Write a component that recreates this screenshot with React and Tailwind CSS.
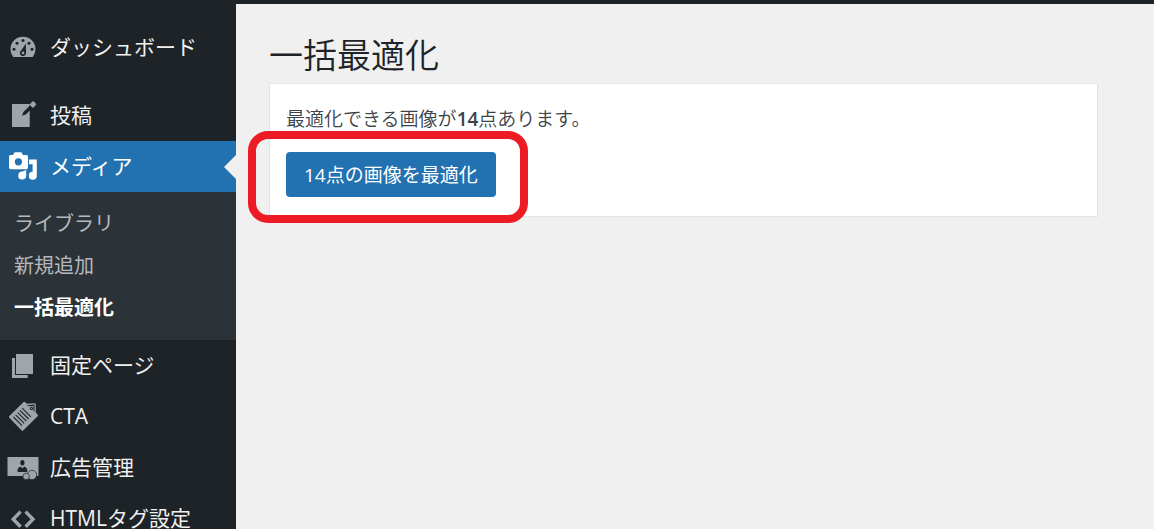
import React from 'react';

const DashboardIcon = () => (
  <svg viewBox="0 0 30 31" className="h-[31px] w-[30px] shrink-0 fill-[#a0a5aa]" aria-hidden="true">
    <path d="M5.2 25A12.5 12.5 0 1 1 24.8 25Z" />
    <g className="fill-[#1d2327]">
      <circle cx="15" cy="8.4" r="1.5" />
      <circle cx="9" cy="11.2" r="1.5" />
      <circle cx="21" cy="11.2" r="1.5" />
      <circle cx="6" cy="17.3" r="1.5" />
      <circle cx="24" cy="17.3" r="1.5" />
      <path d="M17.8 11.6L18 21.4A3.1 3.1 0 1 1 13.4 18.2Z" />
    </g>
    <circle cx="15" cy="20.9" r="1.4" />
  </svg>
);

const PostIcon = () => (
  <svg viewBox="0 0 30 31" className="h-[31px] w-[30px] shrink-0 fill-[#a0a5aa]" aria-hidden="true">
    <path d="M4 4H21.7V27H4Z" />
    <path d="M14 15.8L15.4 12L23 4.4L25.4 6.8L17.8 14.4Z" className="fill-[#1d2327]" />
    <path d="M21.6 4.4L24.4 1.6Q25.2 0.8 26.2 1.8L27.6 3.2Q28.6 4.4 27.6 5.4L24.8 8Z" />
  </svg>
);

const MediaIcon = () => (
  <svg viewBox="0 0 30 31" className="h-[31px] w-[30px] shrink-0 fill-white" aria-hidden="true">
    <path d="M2.5 4H5L6.6 1.2H13.4L15 4H18.4Q20 4 20 5.6V16.6Q20 18.2 18.4 18.2H2.6Q1 18.2 1 16.6V5.6Q1 4 2.5 4Z" />
    <circle cx="10.4" cy="10.8" r="3.6" className="fill-[#2271b1]" />
    <path d="M21 8.4H28.8V25A4 4 0 1 1 24.6 20.8V13.2H21Z" />
    <path d="M14.4 20.6L18.2 19V24.8A4 4 0 1 1 14.4 20.6Z" />
  </svg>
);

const PagesIcon = () => (
  <svg viewBox="0 0 30 31" className="h-[31px] w-[30px] shrink-0 fill-[#a0a5aa]" aria-hidden="true">
    <path d="M4 8H7V25H19.7V28H4Z" />
    <path d="M8 4H25V24H8Z" />
  </svg>
);

const CtaIcon = () => (
  <svg viewBox="0 0 30 31" className="h-[31px] w-[30px] shrink-0 fill-[#a0a5aa]" aria-hidden="true">
    <path d="M1.4 15L15.6 1Q16.4 0.4 17.2 1.2L19 2.8L26.4 2.2Q27.8 2.2 27.8 3.6V11.4L29.6 13.4Q30.4 14.4 29.6 15.2L15.2 29.4Q14.4 30 13.6 29.4L1.2 16.6Q0.6 15.8 1.4 15Z" />
    <g className="fill-none stroke-[#1d2327] stroke-[1.1]">
      <path d="M5.4 16L14 24.6M7.6 13.8L16.2 22.4M9.8 11.6L18.4 20.2M12 9.4L20.6 18M14.2 7.2L22.8 15.8" />
      <path d="M19.4 4.8L26 4.2V10.6" />
      <circle cx="23.4" cy="7.4" r="1.1" />
    </g>
  </svg>
);

const AdsIcon = () => (
  <svg viewBox="0 0 30 31" className="h-[31px] w-[30px] shrink-0 overflow-visible fill-[#a0a5aa]" aria-hidden="true">
    <path d="M-0.5 5H30.5V24H-0.5Z" />
    <g className="fill-[#1d2327]">
      <ellipse cx="14.4" cy="10.8" rx="2.1" ry="2.7" />
      <path d="M9.6 20V17.4Q9.8 15.4 12.6 14.4L14.4 16.6L16.2 14.4Q19 15.4 19.2 17.4V20Z" />
    </g>
    <g className="stroke-[#1d2327] stroke-[0.7]">
      <circle cx="24" cy="23" r="4.7" />
      <circle cx="18.2" cy="24.4" r="3.2" />
    </g>
  </svg>
);

const TagIcon = () => (
  <svg viewBox="0 0 30 31" className="h-[31px] w-[30px] shrink-0 fill-none stroke-[#a0a5aa] stroke-[3.4]" aria-hidden="true">
    <path d="M12.6 8.6L5.2 16.2L12.6 23.8M17.6 8.6L25 16.2L17.6 23.8" />
  </svg>
);

const subItems = [
  { label: 'ライブラリ' },
  { label: '新規追加' },
  { label: '一括最適化', current: true },
];

const MenuItem = ({ icon: Icon, label, active }) => (
  <a
    href="#"
    className={
      active
        ? 'relative flex h-[51px] items-center gap-3 bg-[#2271b1] pl-2 text-[21px] text-white'
        : 'flex h-[51px] items-center gap-3 pl-2 text-[21px] text-[#f0f0f1]'
    }
  >
    <Icon />
    <span className="whitespace-nowrap">{label}</span>
    {active && (
      <span className="absolute top-1/2 right-0 -translate-y-1/2 border-y-[12px] border-r-[12px] border-y-transparent border-r-[#f0f0f0]" />
    )}
  </a>
);

const Sidebar = () => (
  <nav className="w-[236px] shrink-0 bg-[#1d2327] pt-[18px]">
    <MenuItem icon={DashboardIcon} label="ダッシュボード" />
    <div className="h-[17px]" />
    <MenuItem icon={PostIcon} label="投稿" />
    <MenuItem icon={MediaIcon} label="メディア" active />
    <ul className="bg-[#2c3338] py-[11px]">
      {subItems.map((item) => (
        <li key={item.label}>
          <a
            href="#"
            className={
              item.current
                ? 'flex h-[42px] items-center pl-[14px] text-[20px] font-bold text-white'
                : 'flex h-[42px] items-center pl-[14px] text-[20px] text-[#b4b9be]'
            }
          >
            {item.label}
          </a>
        </li>
      ))}
    </ul>
    <MenuItem icon={PagesIcon} label="固定ページ" />
    <MenuItem icon={CtaIcon} label="CTA" />
    <MenuItem icon={AdsIcon} label="広告管理" />
    <MenuItem icon={TagIcon} label="HTMLタグ設定" />
  </nav>
);

const App = () => {
  return (
    <div className="flex h-screen flex-col overflow-hidden bg-[#f0f0f0] font-['Open_Sans','Noto_Sans_CJK_JP',sans-serif]">
      <header className="h-1 shrink-0 bg-[#1d2327]" />
      <div className="flex grow">
        <Sidebar />
        <main className="grow pt-[25px] pr-14 pl-[33px]">
          <h1 className="mb-0.5 text-[34px] leading-[52px] font-[350] text-[#1d2327]">一括最適化</h1>
          <section className="border border-[#e2e4e7] bg-white px-4 pt-5 pb-[19px] text-[#3c434a]">
            <p className="mb-[18px] text-[19px] leading-[30px] font-[350]">
              最適化できる画像が<strong className="font-semibold">14</strong>点あります。
            </p>
            <div className="relative w-fit">
              <button
                type="button"
                className="block h-[45px] rounded bg-[#2271b1] px-[18px] pt-0.5 text-[19px] whitespace-nowrap text-white"
              >
                14点の画像を最適化
              </button>
              {/* Highlight around the button */}
              <div className="pointer-events-none absolute -top-[21px] -right-8 -bottom-[26px] -left-[38px] rounded-[20px] border-8 border-[#ed1c24]" />
            </div>
          </section>
        </main>
      </div>
    </div>
  );
};

export default App;
